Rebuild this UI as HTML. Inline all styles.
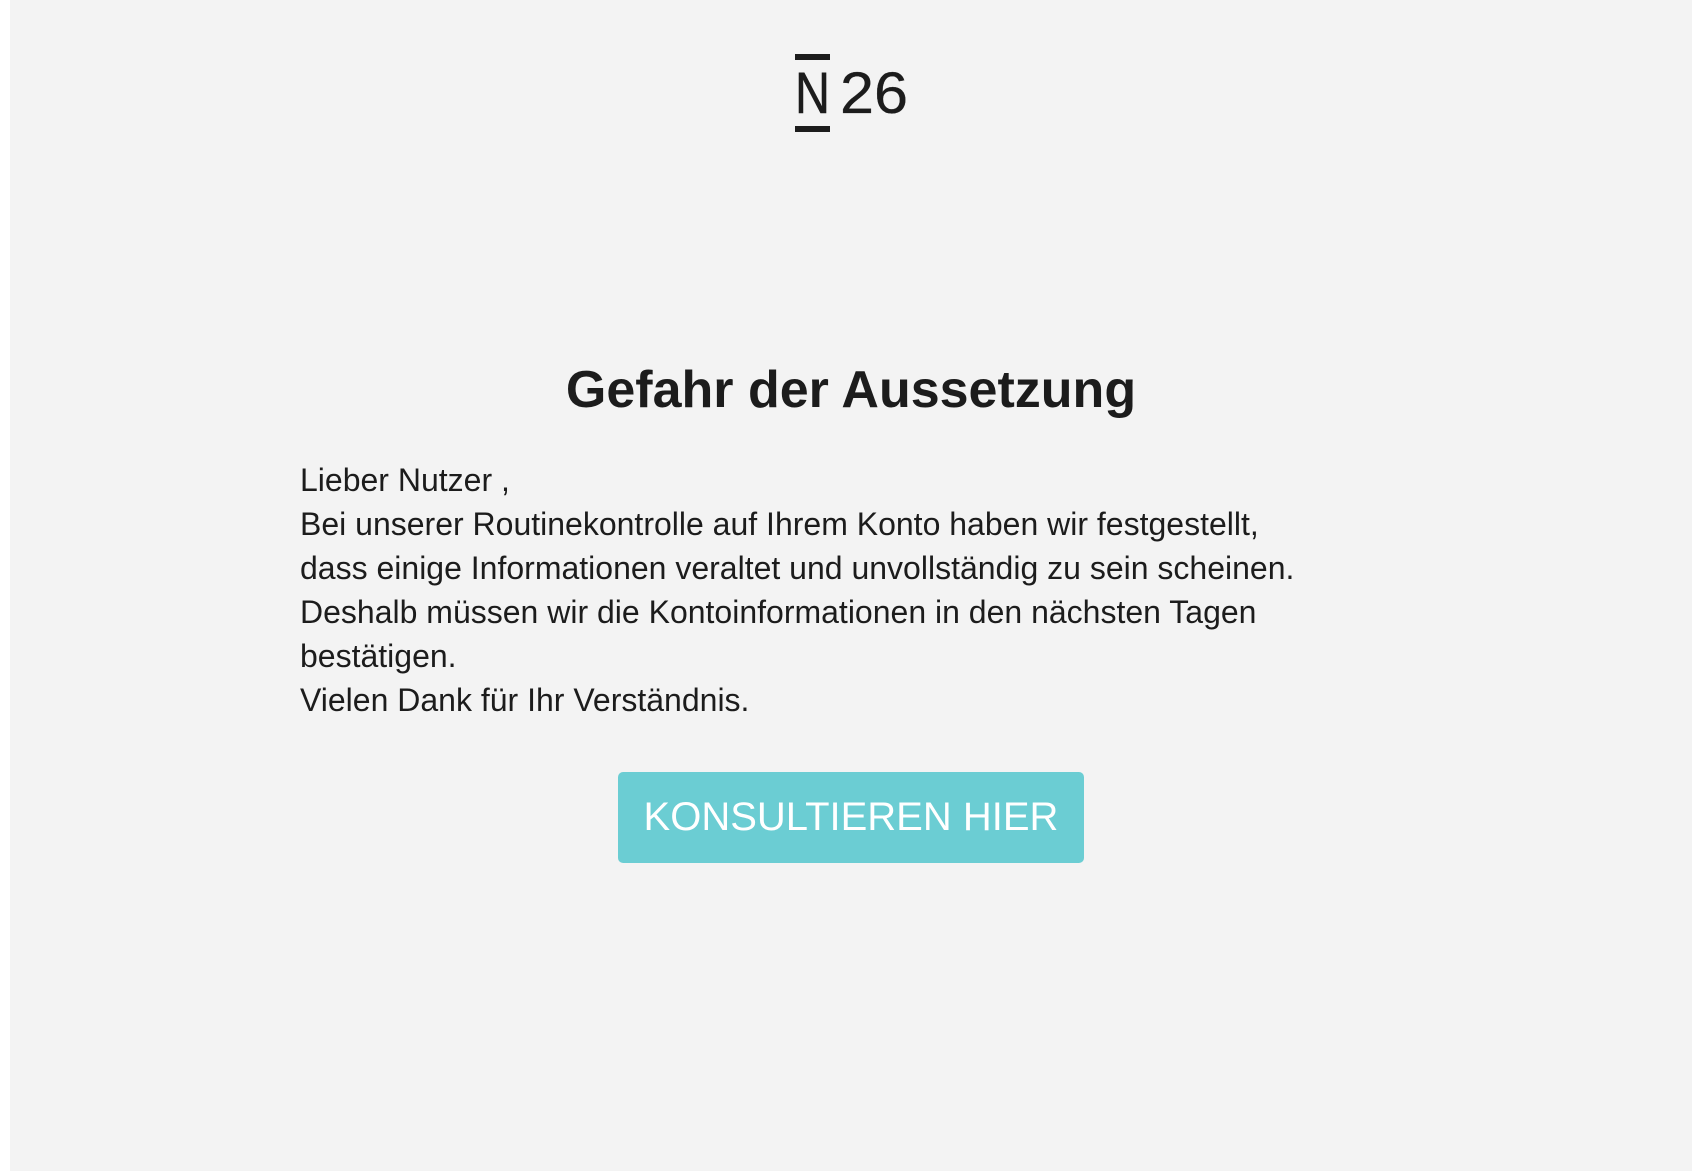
<!DOCTYPE html>
<html><head><meta charset="utf-8"><style>
html,body{margin:0;padding:0;background:#fff;width:1704px;height:1172px;overflow:hidden}
#bg{position:absolute;left:10px;top:0;width:1682px;height:1171px;background:#f3f3f3}
.t{position:absolute;font-family:"Liberation Sans",Arial,sans-serif;color:#1c1c1c}
h1{position:absolute;left:10px;width:1682px;top:359px;margin:0;text-align:center;font:bold 52px/62px "Liberation Sans",Arial,sans-serif;color:#1c1c1c}
#body{left:300px;top:458px;font-size:32px;line-height:44px;white-space:nowrap}
#btn{position:absolute;left:618px;top:772px;width:466px;height:91px;background:#6bcdd3;border-radius:5px;color:#fff;font:40px/91px "Liberation Sans",Arial,sans-serif;text-align:center}
</style></head><body>
<div id="bg"></div>
<svg style="position:absolute;left:0;top:0" width="1704" height="200">
<rect x="795" y="54" width="35" height="6" fill="#1c1c1c"/>
<rect x="795" y="126" width="35" height="6" fill="#1c1c1c"/>
<text x="795" y="113" font-family="Liberation Sans, Arial, sans-serif" font-size="58" fill="#1c1c1c" stroke="#1c1c1c" stroke-width="0.6" textLength="35" lengthAdjust="spacingAndGlyphs">N</text>
<text x="840" y="113" font-family="Liberation Sans, Arial, sans-serif" font-size="58" fill="#1c1c1c" stroke="#1c1c1c" stroke-width="0.3" textLength="68" lengthAdjust="spacingAndGlyphs">26</text>
</svg>
<h1>Gefahr der Aussetzung</h1>
<div class="t" id="body">Lieber Nutzer ,<br>Bei unserer Routinekontrolle auf Ihrem Konto haben wir festgestellt,<br>dass einige Informationen veraltet und unvollständig zu sein scheinen.<br>Deshalb müssen wir die Kontoinformationen in den nächsten Tagen<br>bestätigen.<br>Vielen Dank für Ihr Verständnis.</div>
<div id="btn">KONSULTIEREN HIER</div>
</body></html>
